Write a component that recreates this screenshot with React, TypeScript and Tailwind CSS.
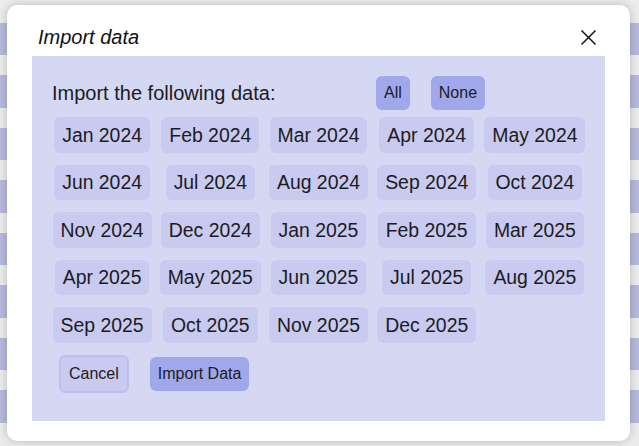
import React from "react";

const months = [
  "Jan 2024", "Feb 2024", "Mar 2024", "Apr 2024", "May 2024",
  "Jun 2024", "Jul 2024", "Aug 2024", "Sep 2024", "Oct 2024",
  "Nov 2024", "Dec 2024", "Jan 2025", "Feb 2025", "Mar 2025",
  "Apr 2025", "May 2025", "Jun 2025", "Jul 2025", "Aug 2025",
  "Sep 2025", "Oct 2025", "Nov 2025", "Dec 2025",
];

export default function App() {
  return (
    <div className="relative h-[446px] w-full overflow-hidden bg-[#ececec] font-['Liberation_Sans',Arial,sans-serif] text-[#1c1b22]">
      {/* background page rows */}
      <div className="flex flex-col gap-[20px] pt-[22.5px]">
        {Array.from({ length: 8 }).map((_, i) => (
          <div key={i} className="h-[32.5px] bg-[#b6b9dc]" />
        ))}
      </div>

      {/* dialog */}
      <div className="absolute left-[7px] top-[5px] flex w-[623px] flex-col rounded-[10px] bg-white px-[25px] pb-[20px] shadow-[0_0_10px_rgba(0,0,0,0.22)]">
        <div className="flex items-center justify-between pt-[21px] pb-[7px]">
          <h2 className="ml-[6px] text-[20px] italic leading-[23px] text-[#111]">Import data</h2>
          <button className="mr-[8px] flex h-[18px] w-[18px] items-center justify-center">
            <svg width="17" height="17" viewBox="0 0 17 17" fill="none" stroke="#1a1a1a" strokeWidth="1.6">
              <line x1="1.5" y1="1.5" x2="15.5" y2="15.5" />
              <line x1="15.5" y1="1.5" x2="1.5" y2="15.5" />
            </svg>
          </button>
        </div>

        <div className="flex flex-col bg-[#d5d8f2] px-[20px] pt-[20px] pb-[28px]">
          <div className="flex items-center">
            <span className="w-[324px] text-[20px] leading-[23px]">Import the following data:</span>
            <button className="rounded-md bg-[#a0a8eb] px-2 py-2 text-[16px] leading-[18px]">All</button>
            <button className="ml-[21px] rounded-md bg-[#a0a8eb] px-2 py-2 text-[16px] leading-[18px]">None</button>
          </div>

          <div className="mt-[7px] grid grid-cols-5 gap-x-2 gap-y-3">
            {months.map((m) => (
              <button
                key={m}
                className="h-[35.5px] justify-self-center whitespace-nowrap rounded-md bg-[#c8caef] px-2 text-[19.4px] leading-[22px]"
              >
                {m}
              </button>
            ))}
          </div>

          <div className="mt-[12px] flex items-center">
            <button className="ml-[7px] rounded-md border-2 border-[#bcc0ee] bg-[#c8caef] px-2 py-2 text-[16px] leading-[18px]">
              Cancel
            </button>
            <button className="ml-[21px] rounded-md bg-[#a0a8eb] px-2 py-2 text-[16px] leading-[18px]">
              Import Data
            </button>
          </div>
        </div>
      </div>
    </div>
  );
}
